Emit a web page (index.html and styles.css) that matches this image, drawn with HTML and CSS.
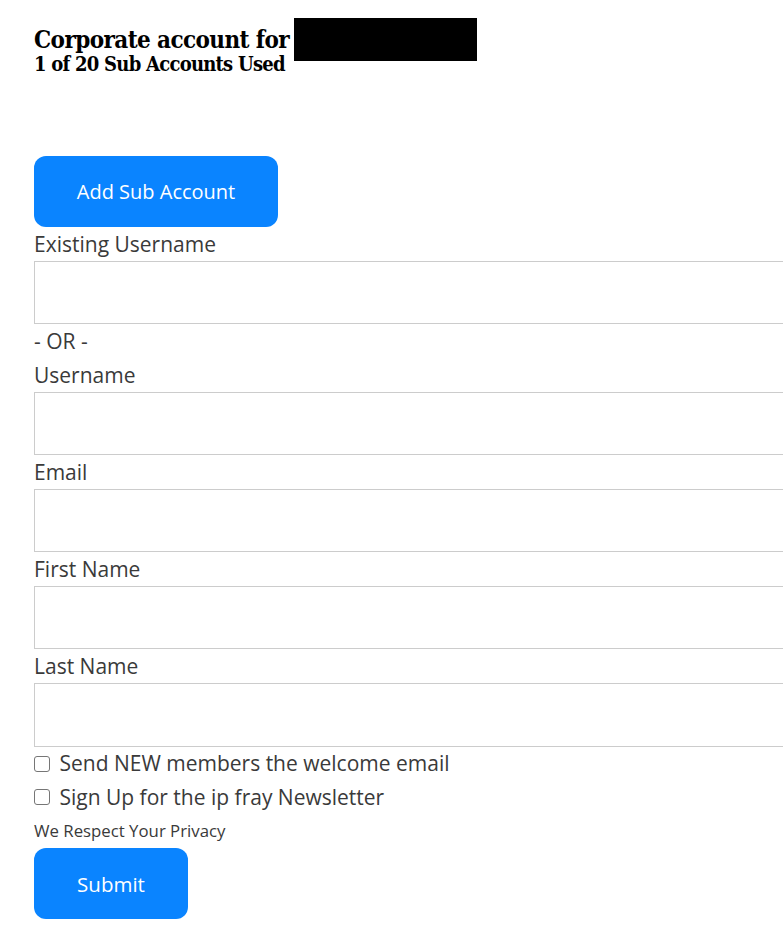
FILE: index.html
```html
<!DOCTYPE html>
<html lang="en">
<head>
<meta charset="utf-8">
<title>Corporate account</title>
<link rel="stylesheet" href="styles.css">
</head>
<body>
<div class="page">
  <h1 class="title">Corporate account for <span class="redacted"></span></h1>
  <h2 class="subtitle">1 of 20 Sub Accounts Used</h2>

  <button class="btn btn-add" type="button">Add Sub Account</button>

  <form class="form">
    <label class="label" for="existing">Existing Username</label>
    <input class="field" id="existing" type="text">
    <div class="label">- OR -</div>
    <label class="label" for="username">Username</label>
    <input class="field" id="username" type="text">
    <label class="label" for="email">Email</label>
    <input class="field" id="email" type="email">
    <label class="label" for="first">First Name</label>
    <input class="field" id="first" type="text">
    <label class="label" for="last">Last Name</label>
    <input class="field field-last" id="last" type="text">
    <label class="check"><input type="checkbox" class="box"> Send NEW members the welcome email</label>
    <label class="check"><input type="checkbox" class="box"> Sign Up for the ip fray Newsletter</label>
    <div class="privacy">We Respect Your Privacy</div>
    <button class="btn btn-submit" type="submit">Submit</button>
  </form>
</div>
</body>
</html>
```

FILE: styles.css
```css
html, body {
  margin: 0;
  padding: 0;
  background: #ffffff;
  overflow-x: hidden;
}
body {
  font-family: "Open Sans", "Noto Sans", sans-serif;
  color: #3a3a3a;
}
.page {
  padding: 26px 0 16px 34px;
}
.title {
  margin: 0;
  display: flex;
  align-items: center;
  gap: 5px;
  font-family: "DejaVu Serif Condensed", "DejaVu Serif", serif;
  font-stretch: condensed;
  font-weight: bold;
  font-size: 24px;
  line-height: 28px;
  letter-spacing: -0.6px;
  color: #000;
}
.redacted {
  display: block;
  width: 183px;
  height: 43px;
  margin: -9px 0 -7px;
  background: #000;
}
.subtitle {
  margin: -1px 0 81px;
  font-family: "DejaVu Serif Condensed", "DejaVu Serif", serif;
  font-stretch: condensed;
  font-weight: bold;
  font-size: 20px;
  line-height: 22px;
  letter-spacing: -0.75px;
  color: #000;
}
.btn {
  display: block;
  height: 71px;
  border: none;
  border-radius: 12px;
  background: #0a84ff;
  color: #fff;
  font-family: "Open Sans", "Noto Sans", sans-serif;
  font-size: 20px;
}
.btn-add {
  width: 244px;
}
.btn-submit {
  width: 154px;
  font-size: 20.5px;
}
.form {
  display: flex;
  flex-direction: column;
  align-items: flex-start;
}
.label {
  display: block;
  font-size: 21px;
  line-height: 34px;
}
.field {
  display: block;
  box-sizing: border-box;
  width: calc(100% + 40px);
  height: 63px;
  margin: 0;
  border: 1px solid #cccccc;
  background: #fff;
}
.field-last {
  height: 64px;
}
.check {
  display: flex;
  align-items: center;
  font-size: 21px;
  line-height: 33.5px;
  white-space: pre;
}
.box {
  appearance: none;
  -webkit-appearance: none;
  box-sizing: border-box;
  width: 16px;
  height: 16px;
  margin: 0 4px 0 0;
  border: 1px solid #767676;
  border-radius: 3px;
  background: #fff;
}
.privacy {
  font-size: 16.8px;
  line-height: 34px;
}
```
